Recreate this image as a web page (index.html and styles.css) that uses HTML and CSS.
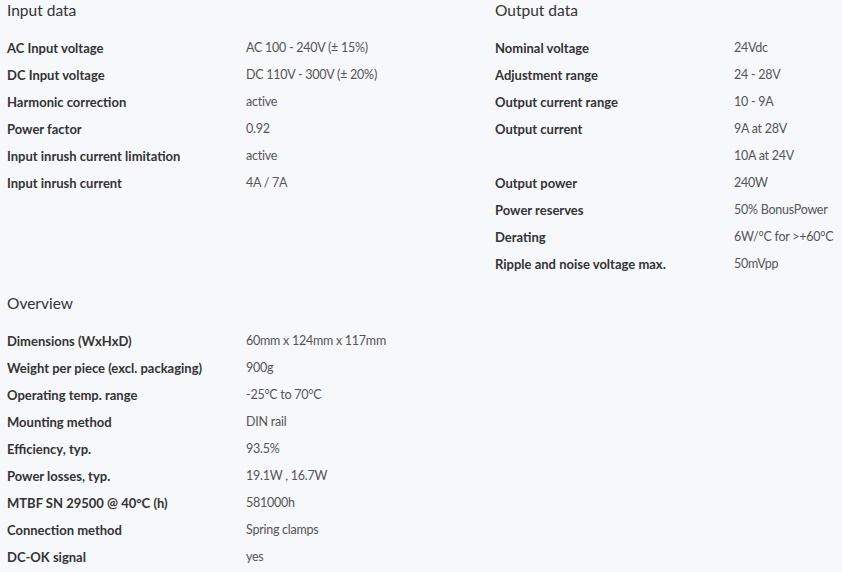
FILE: index.html
```html
<!DOCTYPE html>
<html lang="en">
<head>
<meta charset="utf-8">
<title>Specifications</title>
<link rel="stylesheet" href="styles.css">
</head>
<body>
<div class="page">
  <section class="block">
    <h2 class="title">Input data</h2>
    <div class="rows">
      <div class="row"><span class="label">AC Input voltage</span><span class="value">AC 100 - 240V (± 15%)</span></div>
      <div class="row"><span class="label">DC Input voltage</span><span class="value">DC 110V - 300V (± 20%)</span></div>
      <div class="row"><span class="label">Harmonic correction</span><span class="value">active</span></div>
      <div class="row"><span class="label">Power factor</span><span class="value">0.92</span></div>
      <div class="row"><span class="label">Input inrush current limitation</span><span class="value">active</span></div>
      <div class="row"><span class="label">Input inrush current</span><span class="value">4A / 7A</span></div>
    </div>
  </section>
  <section class="block">
    <h2 class="title">Output data</h2>
    <div class="rows">
      <div class="row"><span class="label">Nominal voltage</span><span class="value">24Vdc</span></div>
      <div class="row"><span class="label">Adjustment range</span><span class="value">24 - 28V</span></div>
      <div class="row"><span class="label">Output current range</span><span class="value">10 - 9A</span></div>
      <div class="row"><span class="label">Output current</span><span class="value">9A at 28V</span></div>
      <div class="row"><span class="label"></span><span class="value">10A at 24V</span></div>
      <div class="row"><span class="label">Output power</span><span class="value">240W</span></div>
      <div class="row"><span class="label">Power reserves</span><span class="value">50% BonusPower</span></div>
      <div class="row"><span class="label">Derating</span><span class="value">6W/°C for &gt;+60°C</span></div>
      <div class="row"><span class="label">Ripple and noise voltage max.</span><span class="value">50mVpp</span></div>
    </div>
  </section>
  <section class="block">
    <h2 class="title">Overview</h2>
    <div class="rows">
      <div class="row"><span class="label">Dimensions (WxHxD)</span><span class="value">60mm x 124mm x 117mm</span></div>
      <div class="row"><span class="label">Weight per piece (excl. packaging)</span><span class="value">900g</span></div>
      <div class="row"><span class="label">Operating temp. range</span><span class="value">-25°C to 70°C</span></div>
      <div class="row"><span class="label">Mounting method</span><span class="value">DIN rail</span></div>
      <div class="row"><span class="label">Efficiency, typ.</span><span class="value">93.5%</span></div>
      <div class="row"><span class="label">Power losses, typ.</span><span class="value">19.1W , 16.7W</span></div>
      <div class="row"><span class="label">MTBF SN 29500 @ 40°C (h)</span><span class="value">581000h</span></div>
      <div class="row"><span class="label">Connection method</span><span class="value">Spring clamps</span></div>
      <div class="row"><span class="label">DC-OK signal</span><span class="value">yes</span></div>
    </div>
  </section>
</div>
</body>
</html>
```

FILE: styles.css
```css
html, body {
  margin: 0;
  padding: 0;
  background: #f7f8fa;
}
body {
  font-family: Lato, "Open Sans", "Liberation Sans", sans-serif;
  color: #333;
  overflow: hidden;
}
.page {
  display: grid;
  grid-template-columns: 488px 1fr;
  padding: 0 0 0 7px;
  row-gap: 16px;
}
.block {
  min-width: 0;
}
.title {
  margin: 0 0 14px 0;
  font-size: 15.5px;
  line-height: 20px;
  font-weight: 400;
  color: #333;
}
.rows {
  display: flex;
  flex-direction: column;
}
.row {
  display: grid;
  grid-template-columns: 239px 1fr;
  height: 27px;
  align-items: center;
  white-space: nowrap;
}
.label {
  font-size: 13px;
  font-weight: 700;
  color: #333;
}
.value {
  font-size: 12.5px;
  letter-spacing: -0.25px;
  font-weight: 400;
  color: #555;
}
```
